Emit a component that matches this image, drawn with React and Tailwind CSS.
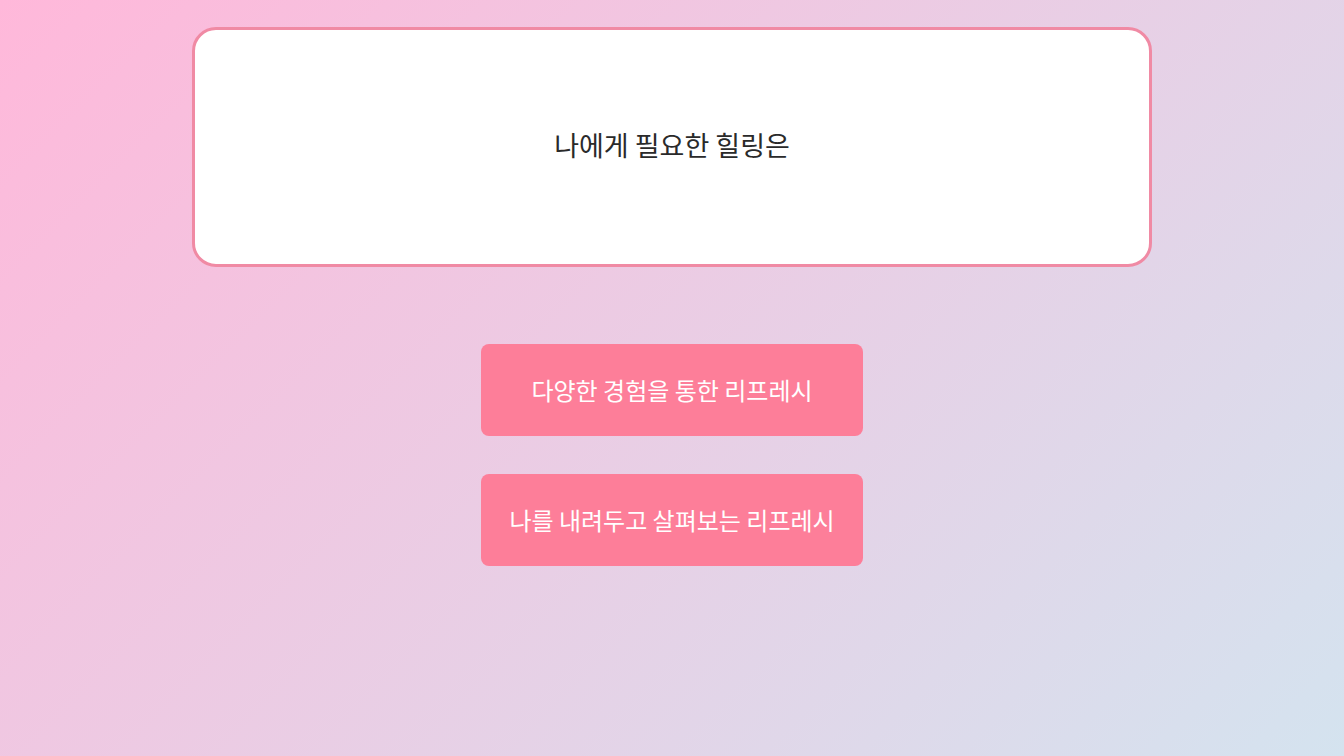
export default function App() {
  const options = ["다양한 경험을 통한 리프레시", "나를 내려두고 살펴보는 리프레시"];

  return (
    <div
      className="min-h-screen w-full bg-[linear-gradient(135deg,#ffb8da_0%,#d4e3ef_100%)] pt-[27px]"
      style={{ fontFamily: '"Noto Sans CJK KR", "Noto Sans", sans-serif' }}
    >
      {/* Question card */}
      <div className="mx-auto flex h-[240px] w-[960px] items-center justify-center rounded-[24px] border-[3px] border-[#f08aa4] bg-white">
        <p className="-mt-1 text-[27px] text-[#2a2a2a]">나에게 필요한 힐링은</p>
      </div>

      {/* Answers */}
      <div className="mt-[77px] flex flex-col items-center gap-[38px]">
        {options.map((label) => (
          <button
            key={label}
            className="flex h-[92px] w-[382px] items-center justify-center rounded-[8px] bg-[#fd7e99] text-[24px] text-white"
          >
            {label}
          </button>
        ))}
      </div>
    </div>
  );
}
